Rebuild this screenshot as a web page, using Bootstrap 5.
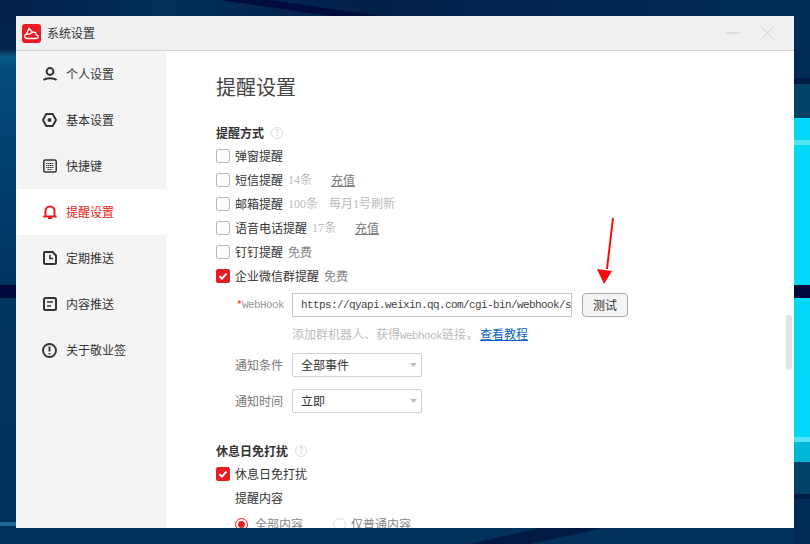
<!DOCTYPE html>
<html lang="zh-CN">

<head>
  <meta charset="UTF-8" />
  <meta name="viewport" content="width=device-width, initial-scale=1" />
  <title>系统设置</title>
  <link href="https://cdn.jsdelivr.net/npm/bootstrap@5.3.0/dist/css/bootstrap.min.css" rel="stylesheet" />
  <style>
    html,
    body {
      height: 544px;
      overflow: hidden;
    }

    body {
      background-color: #022c55;
      color: #333;
      font-family: "Noto Sans CJK SC", "Liberation Sans", sans-serif;
      font-size: 12px;
      line-height: 16px;
      padding: 16px;
    }

    .desk-bg {
      position: absolute;
      left: 0;
      top: 0;
    }

    .app-window {
      position: relative;
      width: 778px;
      height: 512px;
      background-color: #fff;
      overflow: hidden;
    }

    .title-bar {
      height: 35px;
      background-color: #eff0f2;
      border-bottom: 1px solid #d4d5d7;
      padding: 0 6px;
    }

    .title-text {
      margin-left: 6px;
    }

    .side-nav {
      width: 150px;
      background-color: #f4f4f4;
    }

    .side-item {
      height: 46px;
      padding-left: 27px;
      gap: 9px;
      color: #333;
    }

    .side-item.on {
      background-color: #fff;
      color: #e81c24;
    }

    .main-pane {
      padding: 24px 0 0 50px;
      height: 477px;
      overflow: hidden;
    }

    .page-title {
      font-size: 20px;
      font-weight: 400;
      line-height: 24px;
      margin: 0 0 26px;
      color: #444;
    }

    .group-title {
      font-size: 12px;
      font-weight: 700;
      line-height: 16px;
      margin: 0;
      color: #333;
    }

    .group-head {
      margin-bottom: 3px;
    }

    .help-mark {
      width: 12px;
      height: 12px;
      border: 1px solid #ddd;
      border-radius: 50%;
      color: #ccc;
      font-size: 9px;
      line-height: 10px;
      text-align: center;
      margin-left: 7px;
    }

    .check-row {
      height: 24px;
      gap: 5px;
    }

    .check-row .form-check-input {
      width: 14px;
      height: 14px;
      margin: 0;
      border: 1px solid #b9b9b9;
      border-radius: 2px;
      box-shadow: none;
      flex: none;
    }

    .check-row .form-check-input:checked {
      background-color: #e81c24;
      border-color: #e81c24;
      background-image: url("data:image/svg+xml,%3csvg xmlns='http://www.w3.org/2000/svg' viewBox='0 0 14 14'%3e%3cpath fill='none' stroke='%23fff' stroke-width='2.400' d='M3 7.200l2.800 2.800L11 4.200'/%3e%3c/svg%3e");
      background-size: 100% 100%;
    }

    .form-check-input[type=radio] {
      border-radius: 50% !important;
      width: 13px !important;
      height: 13px !important;
      border-color: #ddd !important;
    }

    .form-check-input[type=radio]:checked {
      background-color: #fff !important;
      border-color: #e81c24 !important;
      background-image: url("data:image/svg+xml,%3csvg xmlns='http://www.w3.org/2000/svg' viewBox='0 0 13 13'%3e%3ccircle cx='6.500' cy='6.500' r='4' fill='%23e81c24'/%3e%3c/svg%3e");
      background-size: 100% 100%;
    }

    .muted-note {
      color: #bbb;
      font-family: "Liberation Serif", "Noto Sans CJK SC", serif;
    }

    .free-note {
      color: #888;
    }

    .top-up {
      color: #777;
      text-decoration: underline;
      margin-left: 14px;
    }

    .field-row {
      padding-left: 19px;
    }

    .field-label {
      width: 57px;
      flex: none;
      color: #777;
    }

    .mono-latin {
      font-family: "Liberation Mono", "Noto Sans CJK SC", monospace;
      font-size: 11px;
      letter-spacing: -.6px;
    }

    .hook-label {
      color: #999;
      text-align: right;
      padding-right: 8px;
    }

    .hook-label b {
      color: #e81c24;
      font-weight: 400;
    }

    .hook-input {
      width: 280px;
      height: 24px;
      border: 1px solid #c6c6c6;
      border-radius: 0;
      padding: 0 0 0 8px;
      color: #444;
    }

    .hook-row {
      margin-top: 5px;
    }

    .test-btn {
      width: 46px;
      height: 24px;
      margin-left: 10px;
      padding: 0;
      font-size: 12px;
      line-height: 20px;
      color: #333;
      background-color: #f4f4f4;
      border: 1px solid #aaa;
      border-radius: 4px;
    }

    .hook-hint {
      height: 16px;
      margin: 9px 0 11px 76px;
      color: #bbb;
    }

    .hook-hint a {
      color: #0b62c4;
      margin-left: 2px;
    }

    .pick-box {
      width: 130px;
      height: 24px;
      padding: 0 8px;
      border: 1px solid #d0d0d0;
      border-radius: 2px;
      font-size: 12px;
      line-height: 22px;
      color: #333;
      background-size: 7px 4px;
      background-position: right 4px center;
      background-image: url("data:image/svg+xml,%3csvg xmlns='http://www.w3.org/2000/svg' viewBox='0 0 7 4'%3e%3cpath d='M0 0h7L3.500 4z' fill='%23bbb'/%3e%3c/svg%3e");
    }

    .rest-head {
      margin-top: 30px;
      margin-bottom: 3px;
    }

    .tip-title {
      margin-top: 4px;
      height: 17px;
    }

    .tip-options {
      margin-top: 5px;
    }

    .custom-scroll {
      position: absolute;
      right: 2px;
      top: 299px;
      width: 6px;
      height: 55px;
      background-color: #e2e2e2;
      border-radius: 3px;
    }

    .mark-arrow {
      position: absolute;
      left: 597px;
      top: 217px;
    }
  </style>
</head>

<body>
  <svg class="desk-bg" width="810" height="544" viewBox="0 0 810 544">
    <defs>
      <linearGradient id="leftFade" x1="0" x2="0" y1="0" y2="1">
        <stop offset="0" stop-color="#021f47" />
        <stop offset=".09" stop-color="#02254c" />
        <stop offset=".105" stop-color="#0b5a88" />
        <stop offset=".13" stop-color="#024a7a" />
        <stop offset=".4" stop-color="#023a69" />
        <stop offset=".52" stop-color="#01335f" />
        <stop offset="1" stop-color="#012f5a" />
      </linearGradient>
      <linearGradient id="topFade" x1="0" x2="1" y1="0" y2="0">
        <stop offset="0" stop-color="#021f47" />
        <stop offset=".2" stop-color="#023058" />
        <stop offset=".45" stop-color="#011f47" />
        <stop offset="1" stop-color="#022e58" />
      </linearGradient>
    </defs>
    <rect width="810" height="544" fill="url(#topFade)" />
    <rect width="16" height="544" fill="url(#leftFade)" />
    <rect y="285" width="16" height="13" fill="#000a3a" />
    <rect y="522" width="16" height="4" fill="#1b6a94" />
    <rect y="528" width="810" height="16" fill="#01305a" />
    <polygon points="220,0 270,0 380,16 330,16" fill="#000c3c" />
    <polygon points="470,544 530,544 603,528 540,528" fill="#011a44" />
    <rect x="794" y="0" width="16" height="78" fill="#022c55" />
    <rect x="794" y="78" width="16" height="6" fill="#011c44" />
    <rect x="794" y="84" width="16" height="34" fill="#024268" />
    <rect x="794" y="118" width="16" height="344" fill="#00d8f6" />
    <rect x="794" y="140" width="16" height="5" fill="#52e6f5" />
    <rect x="794" y="285" width="16" height="13" fill="#000a3a" />
    <rect x="794" y="437" width="16" height="5" fill="#52e6f5" />
    <rect x="794" y="442" width="16" height="20" fill="#00b7d8" />
    <rect x="794" y="462" width="16" height="32" fill="#024268" />
    <rect x="794" y="494" width="16" height="5" fill="#011c44" />
    <rect x="794" y="499" width="16" height="45" fill="#022c55" />
  </svg>

  <div class="app-window d-flex flex-column">
    <div class="title-bar d-flex align-items-center flex-shrink-0">
      <svg width="19" height="19" viewBox="0 0 19 19">
        <rect width="19" height="19" rx="3" fill="#e81c24" />
        <path d="M5 14.500c-2.600 0-3.200-3.600-.6-4.300L7 4.500l3.400 3.800c1.500-.7 4 .2 3.800 2.500 1.800.2 2.300 1.300 2 2.300-.3.900-1 1.400-2.200 1.400zM4.500 10.300c2 .3 4-.4 5.900-2" fill="none" stroke="#fff" stroke-width="1.300" />
      </svg>
      <span class="title-text">系统设置</span>
      <svg class="ms-auto" width="50" height="16" viewBox="0 0 50 16">
        <path d="M0 8h14" stroke="#c9c9cb" stroke-width="1" />
        <path d="M35 1.500l13 13M48 1.500l-13 13" stroke="#cfcfd1" stroke-width="1" />
      </svg>
      <span style="width:12px"></span>
    </div>

    <div class="d-flex flex-grow-1">
      <nav class="side-nav flex-shrink-0">
        <div class="side-item d-flex align-items-center">
          <svg width="14" height="14" viewBox="0 0 14 14" fill="none" stroke="currentColor" stroke-width="2">
            <circle cx="7" cy="4.500" r="3.400" />
            <path d="M.5 13.200c1.300-1.800 2.500-2 6.500-2s5.200.2 6.500 2" />
          </svg>
          <span>个人设置</span>
        </div>
        <div class="side-item d-flex align-items-center">
          <svg width="15" height="14" viewBox="0 0 15 14" fill="none" stroke="currentColor" stroke-width="1.900" style="margin-left:-1px">
            <path d="M4.300 1h6.400L14 7l-3.300 6H4.300L1 7z" />
            <circle cx="7.500" cy="7" r="2" fill="currentColor" stroke="none" />
          </svg>
          <span>基本设置</span>
        </div>
        <div class="side-item d-flex align-items-center">
          <svg width="14" height="14" viewBox="0 0 14 14" fill="none" stroke="currentColor">
            <rect x=".8" y="1" width="12.400" height="12" rx="1.500" stroke-width="1.500" />
            <path d="M3 4.500h8M3 6.500h8M3 8.500h8M4.500 10.500h5" stroke-width="1" stroke-dasharray="1.500 .5" />
          </svg>
          <span>快捷键</span>
        </div>
        <div class="side-item on d-flex align-items-center">
          <svg width="14" height="14" viewBox="0 0 14 14" fill="none" stroke="currentColor" stroke-width="2">
            <path d="M2.500 11.500V6a4.500 4.500 0 0 1 9 0v5.500" />
            <path d="M.3 11.500h13.400M5 13.300h4" />
          </svg>
          <span>提醒设置</span>
        </div>
        <div class="side-item d-flex align-items-center">
          <svg width="14" height="14" viewBox="0 0 14 14" fill="none" stroke="currentColor" stroke-width="2">
            <path d="M2 1h7.500L13 4.500V11.500a1.500 1.500 0 0 1-1.500 1.500H2.500A1.500 1.500 0 0 1 1 11.500V2a1 1 0 0 1 1-1z" />
            <path d="M7 3.800v3.700h3.200" stroke-width="1.600" />
          </svg>
          <span>定期推送</span>
        </div>
        <div class="side-item d-flex align-items-center">
          <svg width="14" height="14" viewBox="0 0 14 14" fill="none" stroke="currentColor" stroke-width="2">
            <rect x="1" y="1" width="12" height="12" rx="1.500" />
            <path d="M4 5h6M4 9h4" stroke-width="1.600" />
          </svg>
          <span>内容推送</span>
        </div>
        <div class="side-item d-flex align-items-center">
          <svg width="15" height="15" viewBox="0 0 15 15" fill="none" stroke="currentColor" stroke-width="1.900" style="margin-left:-1px">
            <circle cx="7.500" cy="7.500" r="6.500" />
            <path d="M7.500 3.500v5M7.500 10v1.500" />
          </svg>
          <span>关于敬业签</span>
        </div>
      </nav>

      <main class="main-pane flex-grow-1">
        <h1 class="page-title">提醒设置</h1>

        <div class="group-head d-flex align-items-center">
          <h2 class="group-title">提醒方式</h2>
          <span class="help-mark">?</span>
        </div>
        <label class="check-row d-flex align-items-center">
          <input class="form-check-input" type="checkbox" />
          <span>弹窗提醒</span>
        </label>
        <label class="check-row d-flex align-items-center">
          <input class="form-check-input" type="checkbox" />
          <span>短信提醒</span>
          <span class="muted-note">14条</span>
          <a class="top-up" href="#">充值</a>
        </label>
        <label class="check-row d-flex align-items-center">
          <input class="form-check-input" type="checkbox" />
          <span>邮箱提醒</span>
          <span class="muted-note">100条</span>
          <span class="muted-note" style="margin-left:6px">每月1号刷新</span>
        </label>
        <label class="check-row d-flex align-items-center">
          <input class="form-check-input" type="checkbox" />
          <span>语音电话提醒</span>
          <span class="muted-note">17条</span>
          <a class="top-up" href="#">充值</a>
        </label>
        <label class="check-row d-flex align-items-center">
          <input class="form-check-input" type="checkbox" />
          <span>钉钉提醒</span>
          <span class="free-note">免费</span>
        </label>
        <label class="check-row d-flex align-items-center">
          <input class="form-check-input" type="checkbox" checked />
          <span>企业微信群提醒</span>
          <span class="free-note">免费</span>
        </label>

        <div class="hook-row field-row d-flex align-items-center">
          <span class="field-label hook-label mono-latin"><b>*</b>WebHook</span>
          <input class="form-control hook-input mono-latin" type="text" value="https://qyapi.weixin.qq.com/cgi-bin/webhook/send?key=" />
          <button class="btn test-btn" type="button">测试</button>
        </div>
        <div class="hook-hint">添加群机器人、获得<span class="mono-latin">Webhook</span>链接，<a href="#">查看教程</a></div>

        <div class="field-row d-flex align-items-center mb-2 pb-1">
          <span class="field-label">通知条件</span>
          <select class="form-select pick-box">
            <option>全部事件</option>
          </select>
        </div>
        <div class="field-row d-flex align-items-center">
          <span class="field-label">通知时间</span>
          <select class="form-select pick-box">
            <option>立即</option>
          </select>
        </div>

        <div class="rest-head d-flex align-items-center">
          <h2 class="group-title">休息日免打扰</h2>
          <span class="help-mark">?</span>
        </div>
        <label class="check-row d-flex align-items-center">
          <input class="form-check-input" type="checkbox" checked />
          <span>休息日免打扰</span>
        </label>
        <div class="field-row tip-title">提醒内容</div>
        <div class="tip-options field-row check-row d-flex align-items-center">
          <input class="form-check-input" type="radio" name="tipContent" checked />
          <span class="free-note" style="margin-left:2px">全部内容</span>
          <input class="form-check-input" type="radio" name="tipContent" style="margin-left:25px" />
          <span class="free-note">仅普通内容</span>
        </div>
      </main>
    </div>

    <div class="custom-scroll"></div>
  </div>

  <svg class="mark-arrow" width="24" height="70" viewBox="0 0 24 70">
    <path d="M16 1L10 52" stroke="#f80c0c" stroke-width="2" />
    <path d="M0 52L15 54 7 67z" fill="#f80c0c" />
  </svg>

  <script src="https://cdn.jsdelivr.net/npm/bootstrap@5.3.0/dist/js/bootstrap.bundle.min.js"></script>
</body>

</html>
